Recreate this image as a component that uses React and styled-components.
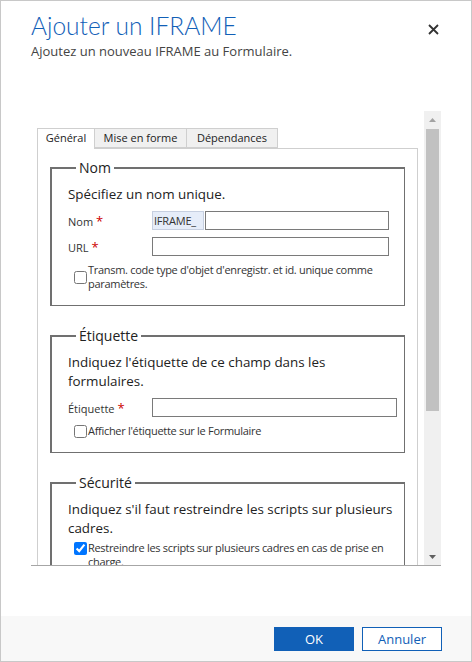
import React from "react";
import styled, { createGlobalStyle } from "styled-components";

const Global = createGlobalStyle`
  html, body { margin: 0; padding: 0; background: #fff; }
  body { font-family: "Open Sans", "Noto Sans", sans-serif; color: #222; }
  * { box-sizing: border-box; }
`;

const Dialog = styled.div`
  width: 472px;
  height: 662px;
  border: 1px solid #c8c8c8;
  display: flex;
  flex-direction: column;
  background: #fff;
`;

const Header = styled.div`
  padding: 9px 31px 0 30px;
  display: flex;
  justify-content: space-between;
  align-items: flex-start;
`;

const Titles = styled.div`
  display: flex;
  flex-direction: column;
`;

const Title = styled.h1`
  margin: 0;
  font-family: "Lato", sans-serif;
  font-weight: 300;
  font-size: 24.5px;
  line-height: 32px;
  color: #1160b7;
`;

const Subtitle = styled.div`
  font-size: 13px;
  line-height: 18px;
  color: #444;
`;

const Close = styled.button`
  border: 0;
  background: none;
  padding: 0;
  margin-top: 12px;
  width: 14px;
  height: 14px;
  display: flex;
  align-items: center;
  justify-content: center;
  cursor: pointer;
`;

const Body = styled.div`
  flex: 1;
  padding: 51px 30px 0 30px;
`;

const Frame = styled.div`
  height: 455px;
  border-bottom: 1px solid #a6a6a6;
  display: flex;
`;

const Content = styled.div`
  flex: 1;
  overflow: hidden;
  padding: 17px 6px 0 6px;
`;

const Scrollbar = styled.div`
  width: 17px;
  background: #f0f0f0;
  display: flex;
  flex-direction: column;
  align-items: center;
`;

const Arrow = styled.div`
  height: 17px;
  width: 17px;
  display: flex;
  align-items: center;
  justify-content: center;
`;

const Thumb = styled.div`
  width: 13px;
  height: 282px;
  background: #c1c1c1;
  margin-top: 1px;
`;

const Spacer = styled.div`
  flex: 1;
`;

const Tabs = styled.div`
  display: flex;
  height: 20px;
`;

const Tab = styled.div`
  width: ${(p) => p.$w}px;
  height: ${(p) => (p.$active ? 21 : 20)}px;
  border: 1px solid #cfcfcf;
  border-bottom: ${(p) => (p.$active ? "0" : "1px solid #cfcfcf")};
  border-left: ${(p) => (p.$first ? "1px solid #cfcfcf" : "0")};
  background: ${(p) => (p.$active ? "#fff" : "#f0f0f0")};
  font-size: 11px;
  line-height: 18px;
  text-align: center;
  color: #222;
  position: relative;
  z-index: 1;
`;

const Panel = styled.div`
  border: 1px solid #cfcfcf;
  padding: 9px 12px 0 12px;
  min-height: 600px;
`;

const Group = styled.fieldset`
  margin: 0 0 20px 0;
  min-width: 0;
  padding: 0 5px 14px 16px;
  border: 1px solid #707070;
  border-top-width: 2px;
  border-left-width: 2px;
`;

const Legend = styled.legend`
  padding: 0 3px;
  margin-left: 8px;
  font-size: 14px;
  line-height: 19px;
  color: #222;
`;

const Desc = styled.div`
  font-size: 13.4px;
  line-height: 19px;
  color: #222;
  margin: 8px 0 ${(p) => (p.$mb ?? 7)}px 0;
`;

const Row = styled.div`
  display: flex;
  align-items: center;
  margin-bottom: 7px;
`;

const Label = styled.div`
  width: 84px;
  font-size: 11px;
  color: #333;
  flex-shrink: 0;
`;

const Star = styled.span`
  color: #c00;
  font-size: 13px;
  margin-left: 3px;
`;

const Prefix = styled.div`
  width: 52px;
  height: 19px;
  background: #e6edf9;
  border: 1px solid #c6cfe0;
  font-size: 11px;
  line-height: 17px;
  padding-left: 1px;
  color: #333;
  margin-right: 1px;
  letter-spacing: -0.2px;
`;

const Input = styled.input`
  width: ${(p) => p.$w}px;
  height: 19px;
  border: 1px solid #7a7a7a;
  border-radius: 0;
  padding: 0 3px;
  font-size: 11px;
  outline: none;
`;

const Check = styled.label`
  display: flex;
  align-items: ${(p) => (p.$top ? "flex-start" : "center")};
  font-size: 11px;
  line-height: 14px;
  letter-spacing: -0.3px;
  color: #333;
  padding-left: 6px;
`;

const Box = styled.input`
  margin: ${(p) => (p.$top ? "1px" : "0")} 1px 0 0;
  width: 13px;
  height: 13px;
  flex-shrink: 0;
`;

const Footer = styled.div`
  height: 45px;
  background: #f8f8f8;
  display: flex;
  justify-content: flex-end;
  align-items: center;
  gap: 8px;
  padding-right: 29px;
`;

const Button = styled.button`
  width: 80px;
  height: 24px;
  font-family: "Open Sans", sans-serif;
  font-size: 13px;
  border: 1px solid #1160b7;
  background: ${(p) => (p.$primary ? "#1160b7" : "#fff")};
  color: ${(p) => (p.$primary ? "#fff" : "#1160b7")};
  padding: 0;
  cursor: pointer;
`;

export default function App() {
  return (
    <>
      <Global />
      <Dialog>
        <Header>
          <Titles>
            <Title>Ajouter un IFRAME</Title>
            <Subtitle>Ajoutez un nouveau IFRAME au Formulaire.</Subtitle>
          </Titles>
          <Close aria-label="Fermer">
            <svg width="11" height="11" viewBox="0 0 11 11">
              <path d="M1 1L10 10M10 1L1 10" stroke="#333" strokeWidth="1.8" />
            </svg>
          </Close>
        </Header>
        <Body>
          <Frame>
            <Content>
              <Tabs>
                <Tab $w={58} $active $first>Général</Tab>
                <Tab $w={92}>Mise en forme</Tab>
                <Tab $w={91}>Dépendances</Tab>
              </Tabs>
              <Panel>
                <Group>
                  <Legend>Nom</Legend>
                  <Desc>Spécifiez un nom unique.</Desc>
                  <Row>
                    <Label>Nom<Star>*</Star></Label>
                    <Prefix>IFRAME_</Prefix>
                    <Input $w={184} />
                  </Row>
                  <Row>
                    <Label>URL<Star>*</Star></Label>
                    <Input $w={237} />
                  </Row>
                  <Check>
                    <Box type="checkbox" />
                    <span>Transm. code type d'objet d'enregistr. et id. unique comme paramètres.</span>
                  </Check>
                </Group>
                <Group>
                  <Legend>Étiquette</Legend>
                  <Desc>Indiquez l'étiquette de ce champ dans les formulaires.</Desc>
                  <Row>
                    <Label>Étiquette<Star>*</Star></Label>
                    <Input $w={245} />
                  </Row>
                  <Check>
                    <Box type="checkbox" />
                    <span>Afficher l'étiquette sur le Formulaire</span>
                  </Check>
                </Group>
                <Group>
                  <Legend>Sécurité</Legend>
                  <Desc $mb={3}>Indiquez s'il faut restreindre les scripts sur plusieurs cadres.</Desc>
                  <Check $top>
                    <Box type="checkbox" $top defaultChecked />
                    <span>Restreindre les scripts sur plusieurs cadres en cas de prise en charge.</span>
                  </Check>
                </Group>
              </Panel>
            </Content>
            <Scrollbar>
              <Arrow>
                <svg width="7" height="4" viewBox="0 0 7 4"><path d="M3.5 0L7 4H0Z" fill="#a3a3a3" /></svg>
              </Arrow>
              <Thumb />
              <Spacer />
              <Arrow>
                <svg width="7" height="4" viewBox="0 0 7 4"><path d="M0 0H7L3.5 4Z" fill="#606060" /></svg>
              </Arrow>
            </Scrollbar>
          </Frame>
        </Body>
        <Footer>
          <Button $primary>OK</Button>
          <Button>Annuler</Button>
        </Footer>
      </Dialog>
    </>
  );
}
